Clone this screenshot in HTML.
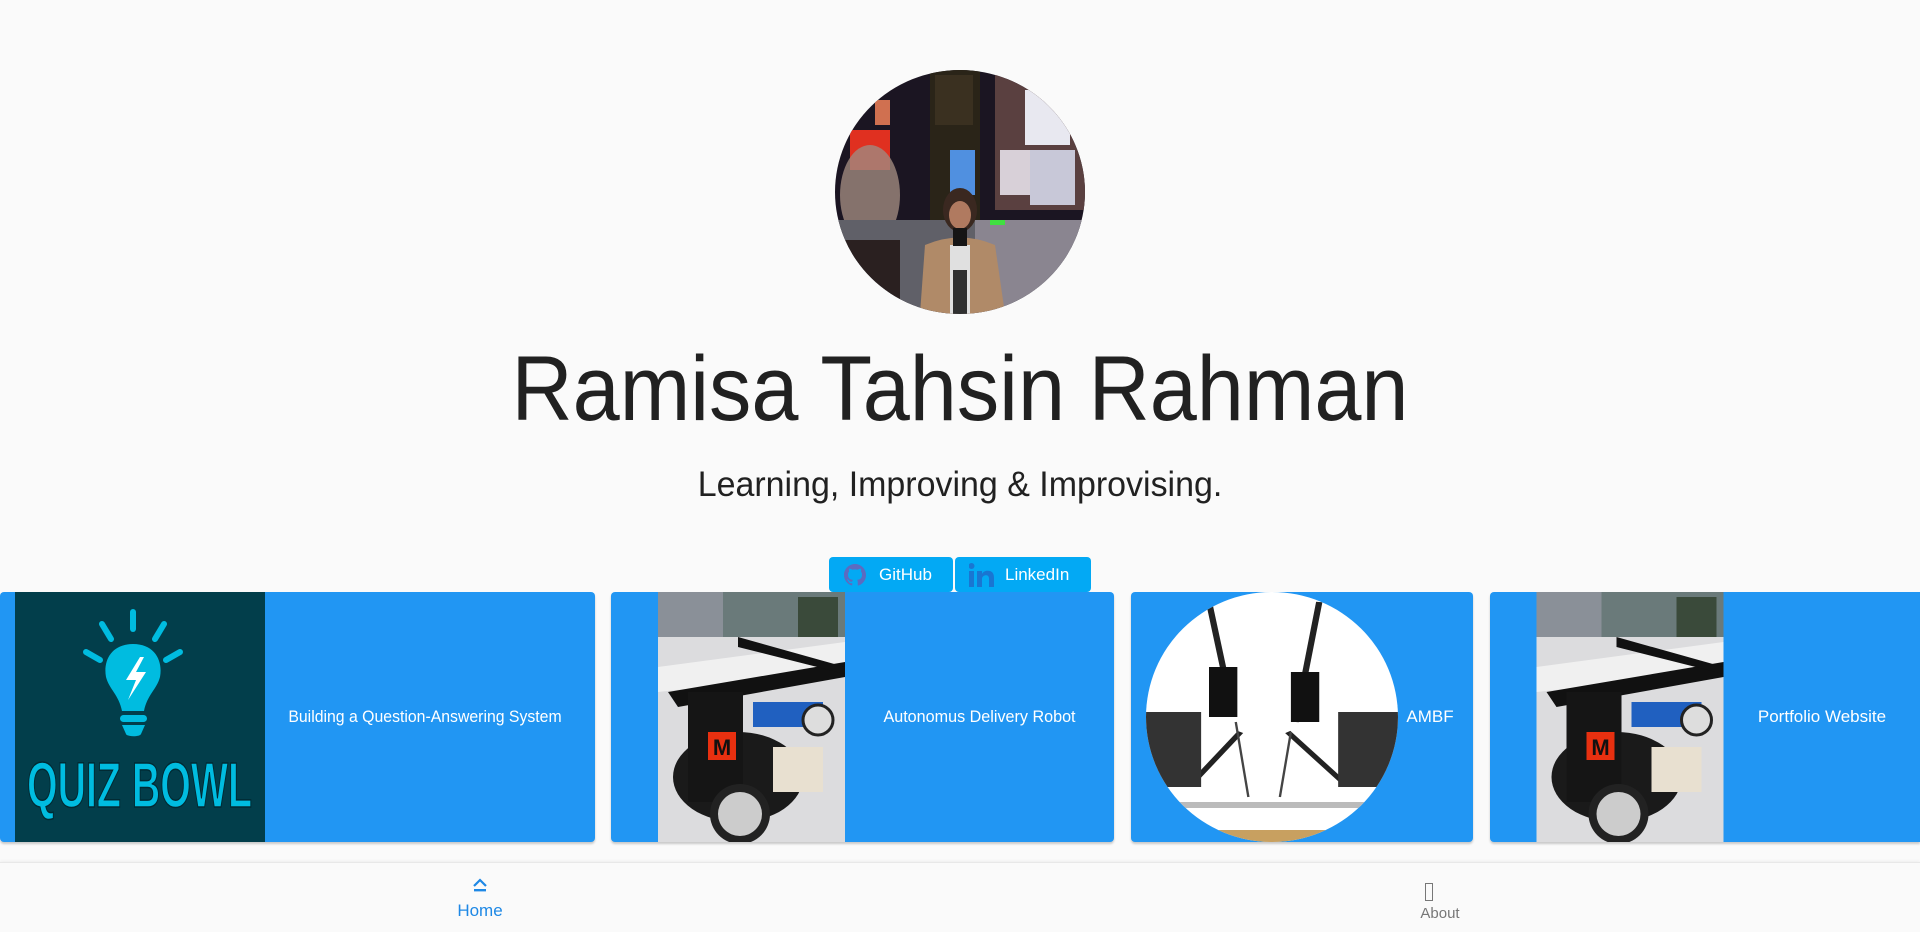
<!DOCTYPE html>
<html><head><meta charset="utf-8"><style>
*{margin:0;padding:0;box-sizing:border-box}
body{width:1920px;height:932px;background:#fafafa;font-family:"Liberation Sans",Roboto,sans-serif;position:relative;overflow:hidden;color:#212121}
.abs{position:absolute}
.avatar{left:835px;top:70px;width:250px;height:244px;border-radius:50%;overflow:hidden}
h1{position:absolute;left:0;width:1920px;top:332px;text-align:center;font-weight:300;font-size:92px;line-height:115px;color:#212121;transform:scaleX(0.92);transform-origin:960px 0}
.sub{position:absolute;left:0;width:1920px;top:462px;text-align:center;font-size:35px;line-height:46px;color:#212121;transform:scaleX(0.97);transform-origin:960px 0}
.btn{position:absolute;top:557px;height:35px;background:#03a9f4;border-radius:4px;color:#fff;font-size:17px;line-height:35px}
.card{position:absolute;top:592px;height:250px;background:#2196f3;border-radius:4px;box-shadow:0 2px 2px rgba(0,0,0,.2);overflow:hidden}
.card .t{position:absolute;top:0;height:250px;line-height:250px;color:#fff;font-size:17px;text-align:center;white-space:nowrap}
.nav{left:0;top:862px;width:1920px;height:70px;background:#fafafa;border-top:1px solid #e8e8e8;box-shadow:0 -1px 3px rgba(0,0,0,.05)}
</style></head><body>
<div class="abs avatar">
<svg width="250" height="244" viewBox="0 0 250 244">
<rect width="250" height="244" fill="#1b1522"/>
<rect x="95" y="0" width="50" height="150" fill="#2a2418"/>
<rect x="100" y="5" width="38" height="50" fill="#3a3020"/>
<rect x="160" y="0" width="90" height="140" fill="#5a4040"/>
<rect x="190" y="20" width="45" height="55" fill="#e8e8f0"/>
<rect x="165" y="80" width="30" height="45" fill="#d8d0d8"/>
<rect x="195" y="80" width="45" height="55" fill="#c8c8d8"/>
<rect x="15" y="60" width="40" height="40" fill="#e03020"/>
<rect x="40" y="30" width="15" height="25" fill="#d07050"/>
<rect x="115" y="80" width="25" height="45" fill="#5090e0"/>
<ellipse cx="35" cy="125" rx="30" ry="50" fill="#a08a80" opacity=".8"/>
<rect x="0" y="150" width="250" height="94" fill="#606068"/>
<rect x="140" y="150" width="110" height="94" fill="#8a8590"/>
<rect x="155" y="150" width="15" height="5" fill="#40e040"/>
<rect x="10" y="170" width="55" height="74" fill="#2a2020"/>
<path d="M85 244 L90 175 Q125 160 160 175 L170 244Z" fill="#b08a68"/>
<rect x="115" y="175" width="20" height="69" fill="#e0e0e0"/>
<rect x="118" y="200" width="14" height="44" fill="#303030"/>
<ellipse cx="125" cy="140" rx="17" ry="22" fill="#3a2820"/>
<ellipse cx="125" cy="145" rx="11" ry="14" fill="#b07a60"/>
<rect x="118" y="158" width="14" height="18" fill="#151515"/>
</svg></div>
<h1>Ramisa Tahsin Rahman</h1>
<div class="sub">Learning, Improving &amp; Improvising.</div>

<div class="btn" style="left:829px;width:124px">
<svg class="abs" style="left:15px;top:7px" width="22" height="22" viewBox="0 0 16 16"><path fill="#5c6bc0" d="M8 0C3.58 0 0 3.58 0 8c0 3.54 2.29 6.53 5.47 7.59.4.07.55-.17.55-.38v-1.330c-2.230.48-2.700-1.070-2.700-1.070-.36-.92-.89-1.170-.89-1.170-.73-.5.06-.49.06-.49.8.06 1.230.83 1.230.83.71 1.220 1.870.87 2.330.66.07-.52.28-.87.51-1.070-1.780-.2-3.640-.89-3.640-3.950 0-.87.31-1.590.82-2.150-.08-.2-.36-1.020.08-2.120 0 0 .67-.21 2.200.82a7.6 7.6 0 014 0c1.530-1.040 2.200-.82 2.200-.82.44 1.100.16 1.920.08 2.120.51.56.82 1.270.82 2.150 0 3.070-1.870 3.750-3.650 3.950.29.25.54.73.54 1.480v2.200c0 .21.15.46.55.38A8 8 0 0016 8c0-4.420-3.580-8-8-8z"/></svg>
<span class="abs" style="left:50px">GitHub</span></div>
<div class="btn" style="left:955px;width:136px">
<svg class="abs" style="left:14px;top:6px" width="26" height="24" viewBox="0 0 26 24"><rect x="0" y="8" width="5" height="16" fill="#1976d2"/><circle cx="2.5" cy="3" r="3" fill="#1976d2"/><path d="M8 8h5v3c1-2 3-3.2 5.5-3.2C23 7.8 25 10 25 15v9h-5v-8c0-2.5-1-3.8-3-3.8S13 13.5 13 16v8H8z" fill="#1976d2"/></svg>
<span class="abs" style="left:50px">LinkedIn</span></div>

<div class="card" style="left:0;width:595px">
<svg class="abs" style="left:15px;top:0" width="250" height="250" viewBox="0 0 250 250">
<rect width="250" height="250" fill="#023e4b"/>
<g stroke="#00bce0" stroke-width="6" stroke-linecap="round">
<line x1="118" y1="20" x2="118" y2="37"/><line x1="87" y1="32" x2="96" y2="47"/><line x1="149" y1="32" x2="140" y2="47"/>
<line x1="71" y1="60" x2="85" y2="68"/><line x1="165" y1="60" x2="151" y2="68"/></g>
<path d="M118 52c-22 0-30 17-27 33 3 12 13 18 16 34h22c3-16 13-22 16-34 3-16-5-33-27-33z" fill="#00bce0"/>
<path d="M125 65l-14 23h10l-8 20 18-28h-10l8-15z" fill="#fff"/>
<rect x="105" y="123" width="27" height="7" rx="3.5" fill="#00bce0"/>
<path d="M107 133h23l-4 9c-1 3-14 3-15 0z" fill="#00bce0"/>
<text x="12" y="215" font-family="Liberation Sans,sans-serif" font-size="64" fill="#00bce0" stroke="#012a33" stroke-width="1.5" font-weight="bold" textLength="225" lengthAdjust="spacingAndGlyphs">QUIZ BOWL</text>
</svg>
<div class="t" style="left:265px;width:320px;transform:scaleX(0.93)">Building a Question-Answering System</div>
</div>

<div class="card" style="left:611px;width:503px">
<svg class="abs" style="left:47px;top:0" width="187" height="250" viewBox="0 0 187 250">
<rect width="187" height="250" fill="#dcdcde"/>
<rect width="187" height="45" fill="#6a7a7a"/><rect x="0" y="0" width="65" height="45" fill="#8a9098"/>
<rect x="140" y="5" width="40" height="40" fill="#3a4a3a"/>
<path d="M0 75L187 50V80L0 100Z" fill="#f0f0f0"/>
<path d="M10 100L187 70V85L20 115Z" fill="#111"/>
<path d="M80 45L187 75V82L80 55Z" fill="#111"/>
<ellipse cx="80" cy="185" rx="65" ry="45" fill="#1a1a1a"/>
<rect x="30" y="100" width="55" height="110" fill="#151515"/>
<rect x="50" y="140" width="28" height="28" fill="#e83010"/>
<text x="64" y="163" text-anchor="middle" font-size="22" font-weight="bold" fill="#111">M</text>
<rect x="115" y="155" width="50" height="45" fill="#e8e0d0"/>
<circle cx="82" cy="222" r="30" fill="#222"/><circle cx="82" cy="222" r="22" fill="#ccc"/>
<rect x="95" y="110" width="70" height="25" fill="#2060c0"/>
<circle cx="160" cy="128" r="15" fill="#ddd" stroke="#222" stroke-width="3"/>
</svg>
<div class="t" style="left:234px;width:269px;transform:scaleX(0.95)">Autonomus Delivery Robot</div>
</div>

<div class="card" style="left:1131px;width:342px">
<svg class="abs" style="left:15px;top:0" width="252" height="250" viewBox="0 0 160 250" preserveAspectRatio="none">
<defs><clipPath id="e"><ellipse cx="80" cy="125" rx="80" ry="125"/></clipPath></defs>
<g clip-path="url(#e)">
<rect width="160" height="250" fill="#fff"/>
<g stroke="#222" stroke-width="4"><line x1="40" y1="10" x2="55" y2="120"/><line x1="110" y1="10" x2="95" y2="130"/>
<line x1="60" y1="140" x2="30" y2="190"/><line x1="90" y1="140" x2="125" y2="190"/></g>
<rect x="40" y="75" width="18" height="50" fill="#111"/><rect x="92" y="80" width="18" height="50" fill="#111"/>
<rect x="0" y="120" width="35" height="75" fill="#333"/><rect x="122" y="120" width="38" height="75" fill="#333"/>
<g stroke="#444" stroke-width="1.5"><line x1="57" y1="130" x2="65" y2="205"/><line x1="92" y1="140" x2="85" y2="205"/></g>
<rect x="0" y="210" width="160" height="6" fill="#bbb"/>
<rect x="0" y="238" width="160" height="12" fill="#c8a060"/>
</g></svg>
<div class="t" style="left:270px;width:58px">AMBF</div>
</div>

<div class="card" style="left:1490px;width:430px;border-radius:4px 0 0 4px">
<svg class="abs" style="left:46px;top:0" width="188" height="250" viewBox="0 0 187 250">
<rect width="187" height="250" fill="#dcdcde"/>
<rect width="187" height="45" fill="#6a7a7a"/><rect x="0" y="0" width="65" height="45" fill="#8a9098"/>
<rect x="140" y="5" width="40" height="40" fill="#3a4a3a"/>
<path d="M0 75L187 50V80L0 100Z" fill="#f0f0f0"/>
<path d="M10 100L187 70V85L20 115Z" fill="#111"/>
<path d="M80 45L187 75V82L80 55Z" fill="#111"/>
<ellipse cx="80" cy="185" rx="65" ry="45" fill="#1a1a1a"/>
<rect x="30" y="100" width="55" height="110" fill="#151515"/>
<rect x="50" y="140" width="28" height="28" fill="#e83010"/>
<text x="64" y="163" text-anchor="middle" font-size="22" font-weight="bold" fill="#111">M</text>
<rect x="115" y="155" width="50" height="45" fill="#e8e0d0"/>
<circle cx="82" cy="222" r="30" fill="#222"/><circle cx="82" cy="222" r="22" fill="#ccc"/>
<rect x="95" y="110" width="70" height="25" fill="#2060c0"/>
<circle cx="160" cy="128" r="15" fill="#ddd" stroke="#222" stroke-width="3"/>
</svg>
<div class="t" style="left:234px;width:196px">Portfolio Website</div>
</div>

<div class="abs nav">
<svg class="abs" style="left:472px;top:15px" width="16" height="15" viewBox="0 0 16 15"><path d="M2 8L8 2L14 8" fill="none" stroke="#1e88e5" stroke-width="2.2"/><rect x="2" y="11" width="12" height="2.4" fill="#1e88e5"/></svg>
<div class="abs" style="left:420px;width:120px;top:38px;text-align:center;color:#1e88e5;font-size:17px">Home</div>
<div class="abs" style="left:1425px;top:20px;width:8px;height:18px;border:1.3px solid #777"></div>
<div class="abs" style="left:1380px;width:120px;top:42px;text-align:center;color:#777;font-size:15px">About</div>
</div>
</body></html>
